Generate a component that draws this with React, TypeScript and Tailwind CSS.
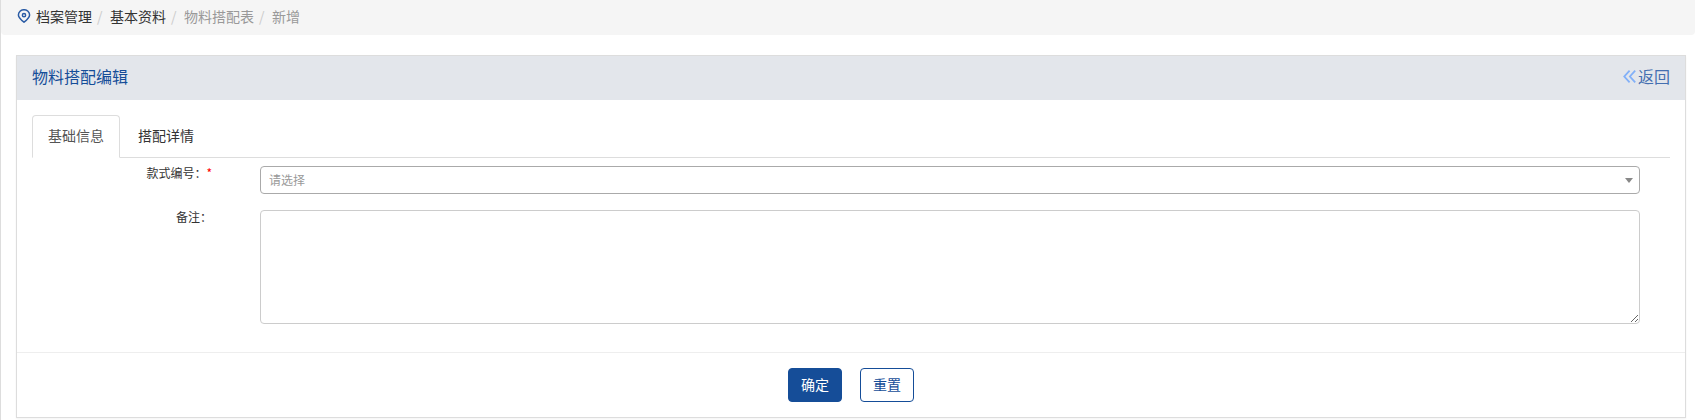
import { useState } from "react";
import type { FormEvent } from "react";

interface Crumb {
  label: string;
  muted?: boolean;
}

const crumbs: Crumb[] = [
  { label: "档案管理" },
  { label: "基本资料" },
  { label: "物料搭配表", muted: true },
  { label: "新增", muted: true },
];

const tabs = ["基础信息", "搭配详情"];

function PinIcon() {
  return (
    <svg viewBox="0 0 14 14" className="w-3.5 h-3.5 mr-[5px] shrink-0" fill="none" stroke="#2b5ca5" strokeWidth="1.5" aria-hidden="true">
      <path d="M7 13.2C4.2 11 1.4 8.8 1.4 6a5.6 5.3 0 0 1 11.2 0c0 2.8-2.8 5-5.6 7.2z" />
      <circle cx="7" cy="6.2" r="1.6" />
    </svg>
  );
}

function BackIcon() {
  return (
    <svg viewBox="0 0 13 13" className="w-[13px] h-[13px] mr-0.5" fill="none" stroke="#82b0f8" strokeWidth="1.8" aria-hidden="true">
      <path d="M6.6 0.7L1.3 6.5l5.3 5.8M12.2 0.7L6.9 6.5l5.3 5.8" />
    </svg>
  );
}

function Breadcrumb() {
  return (
    <nav className="bg-[#f5f5f5] rounded-b h-[35px] pl-4 pb-1 flex items-center text-sm">
      <PinIcon />
      <ol className="flex">
        {crumbs.map((crumb, idx) => (
          <li key={crumb.label} className="flex">
            {idx > 0 && <span className="w-2 mx-[5px] text-[#ccc]">/</span>}
            {crumb.muted ? (
              <span className="text-[#999]">{crumb.label}</span>
            ) : (
              <a href="#" className="text-[#333]">{crumb.label}</a>
            )}
          </li>
        ))}
      </ol>
    </nav>
  );
}

export default function App() {
  const [activeTab, setActiveTab] = useState(tabs[0]);

  const handleSubmit = (e: FormEvent) => e.preventDefault();

  return (
    <div className="min-h-screen bg-white border-l border-[#ddd] text-[#333] font-['Noto_Sans_CJK_SC','Liberation_Sans',sans-serif]">
      <Breadcrumb />

      <form onSubmit={handleSubmit} className="mt-5 ml-[15px] mr-[9px] border border-[#ddd] shadow-xs">
        {/* Panel header */}
        <div className="h-11 px-[15px] pb-1 bg-[#e3e6eb] flex items-center justify-between text-base">
          <h1 className="text-[#154d98]">物料搭配编辑</h1>
          <a href="#" className="flex items-center text-[#446fb0]">
            <BackIcon />
            返回
          </a>
        </div>

        <div className="px-[15px] pt-[15px] pb-7">
          {/* Tabs */}
          <div role="tablist" className="flex border-b border-[#ddd] text-sm">
            {tabs.map((tab) => (
              <button
                key={tab}
                type="button"
                role="tab"
                aria-selected={tab === activeTab}
                onClick={() => setActiveTab(tab)}
                className={
                  tab === activeTab
                    ? "h-[43px] px-[15px] pb-1 -mb-px mr-0.5 border border-b-white border-[#ddd] rounded-t bg-white text-[#555]"
                    : "h-[43px] px-[15px] pb-1 -mb-px mr-0.5 border border-transparent rounded-t text-[#333]"
                }
              >
                {tab}
              </button>
            ))}
          </div>

          {/* Fields */}
          <div className="mt-2 pr-[30px] flex flex-col gap-4 text-xs">
            <div className="flex gap-12">
              <label htmlFor="styleNo" className="w-[180px] shrink-0 h-4 leading-[14px] text-right">
                款式编号：<span className="text-[#f00]">*</span>
              </label>
              <div className="relative flex-1">
                <select
                  id="styleNo"
                  defaultValue=""
                  className="block w-full h-7 px-2 border border-[#aaa] rounded bg-white text-[#999] appearance-none"
                >
                  <option value="">请选择</option>
                </select>
                <svg viewBox="0 0 8 5" className="absolute right-[7px] top-3 w-2 h-[5px] pointer-events-none" fill="#888" aria-hidden="true">
                  <path d="M0 0h8L4 5z" />
                </svg>
              </div>
            </div>

            <div className="flex gap-12">
              <label htmlFor="remark" className="w-[180px] shrink-0 h-4 leading-[14px] text-right">
                备注：
              </label>
              <textarea id="remark" className="block flex-1 h-[114px] px-2 py-1 border border-[#ccc] rounded bg-white resize" />
            </div>
          </div>
        </div>

        {/* Footer actions */}
        <div className="border-t border-[#eee] py-[15px] flex justify-center gap-[18px] text-sm">
          <button type="submit" className="h-[34px] px-3 pb-0.5 border border-[#154d98] rounded bg-[#154d98] text-white">
            确定
          </button>
          <button type="reset" className="h-[34px] px-3 pb-0.5 border border-[#154d98] rounded bg-white text-[#154d98]">
            重置
          </button>
        </div>
      </form>
    </div>
  );
}
